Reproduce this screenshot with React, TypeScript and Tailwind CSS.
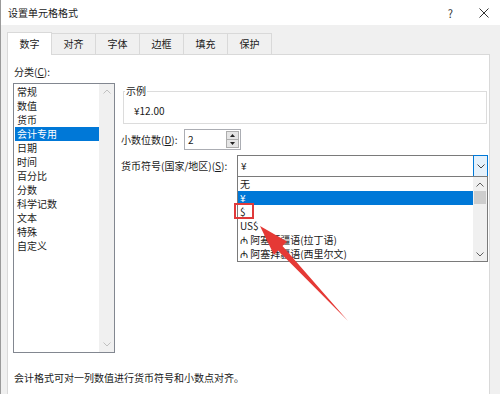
const categories = ["常规", "数值", "货币", "会计专用", "日期", "时间", "百分比", "分数", "科学记数", "文本", "特殊", "自定义"];
const tabs = ["数字", "对齐", "字体", "边框", "填充", "保护"];
const symbols = ["无", "¥", "$", "US$", "₼ 阿塞拜疆语(拉丁语)", "₼ 阿塞拜疆语(西里尔文)"];

const Chevron = ({ up, color }: { up?: boolean; color: string }) => (
  <svg width="8" height="5" viewBox="0 0 8 5">
    <polyline
      points={up ? "0.5,4.5 4,1 7.5,4.5" : "0.5,0.5 4,4 7.5,0.5"}
      fill="none"
      stroke={color}
      strokeWidth="1"
    />
  </svg>
);

const Triangle = ({ up }: { up?: boolean }) => (
  <svg width="5" height="3" viewBox="0 0 5 3">
    <polygon points={up ? "0,3 2.5,0 5,3" : "0,0 5,0 2.5,3"} fill="#222" />
  </svg>
);

export default function App() {
  return (
    <div className="relative w-[500px] h-[394px] overflow-hidden bg-[#f0f0f0] border-l border-[#9a9a9a] font-['Noto_Sans_CJK_SC',sans-serif] text-[10px] text-[#1a1a1a]">
      {/* title bar */}
      <div className="flex h-[25px] items-center bg-white pl-[7px]">
        <span className="leading-[14px]">设置单元格格式</span>
        <span className="ml-auto mr-[26px] text-[11px] leading-[14px] text-[#333]">?</span>
        <svg width="10" height="10" viewBox="0 0 10 10" className="mr-[11px]">
          <path d="M0.5 0.5 L9.5 9.5 M9.5 0.5 L0.5 9.5" stroke="#333" strokeWidth="1" />
        </svg>
      </div>

      <div className="pl-[6px] pt-[7px]">
        {/* tabs */}
        <div className="flex h-[22px] items-end">
          {tabs.map((t, i) =>
            i === 0 ? (
              <div
                key={t}
                className="relative z-10 -mb-px flex h-[23px] w-[45px] items-center justify-center border border-b-0 border-[#d9d9d9] bg-white leading-[14px]"
              >
                {t}
              </div>
            ) : (
              <div
                key={t}
                className="-ml-px flex h-[21px] w-[45px] items-center justify-center border border-b-0 border-[#d9d9d9] bg-[#f0f0f0] leading-[14px]"
              >
                {t}
              </div>
            )
          )}
        </div>

        {/* panel */}
        <div className="h-[345px] w-[483px] border border-[#d9d9d9] bg-white pl-[5px] pt-[10px]">
          <div className="flex">
            {/* category list */}
            <div className="w-[102px]">
              <div className="h-[14px] pl-px leading-[14px]">
                分类(<span className="underline">C</span>):
              </div>
              <div className="mt-[4px] flex h-[270px] border border-[#828790]">
                <div className="flex-1 pl-px pt-px">
                  {categories.map((c) => (
                    <div
                      key={c}
                      className={
                        c === "会计专用"
                          ? "h-[14px] bg-[#0078d7] pl-[2px] leading-[14px] text-white"
                          : "h-[14px] pl-[2px] leading-[14px]"
                      }
                    >
                      {c}
                    </div>
                  ))}
                </div>
                <div className="flex w-[15px] flex-col items-center justify-between bg-[#f0f0f0] py-[5px]">
                  <Chevron up color="#c0c0c0" />
                  <Chevron color="#c0c0c0" />
                </div>
              </div>
            </div>

            {/* right side */}
            <div className="ml-[6px] mr-[2px] flex-1">
              <fieldset className="ml-[2px] mt-[20px] border border-[#dcdcdc]">
                <legend className="ml-px px-px leading-[12px]">示例</legend>
                <div className="pb-[5px] pl-[10px] pt-[7px] leading-[14px]">¥12.00</div>
              </fieldset>

              <div className="mt-[5px] flex items-center">
                <div className="w-[63px] leading-[14px]">
                  小数位数(<span className="underline">D</span>):
                </div>
                <div className="flex h-[21px] w-[57px] border border-[#abadb3]">
                  <div className="flex-1 pl-[3px] leading-[19px]">2</div>
                  <div className="my-px mr-px flex w-[13px] flex-col border border-[#adadad]">
                    <div className="flex flex-1 items-center justify-center border-b border-[#adadad] bg-[#e5e5e5]">
                      <Triangle up />
                    </div>
                    <div className="flex flex-1 items-center justify-center bg-[#e5e5e5]">
                      <Triangle />
                    </div>
                  </div>
                </div>
              </div>

              <div className="mt-[5px] flex items-center">
                <div className="w-[116px] leading-[14px]">
                  货币符号(国家/地区)(<span className="underline">S</span>):
                </div>
                <div className="relative -mr-px flex h-[22px] flex-1 border border-[#7a7a7a]">
                  <div className="flex-1 pl-[3px] leading-[20px]">¥</div>
                  <div className="-my-px -mr-px flex w-[15px] items-center justify-center border border-[#0078d7] bg-[#e5f1fb]">
                    <Chevron color="#444" />
                  </div>

                  {/* dropdown list */}
                  <div className="absolute -left-px -right-px top-full z-20 flex h-[86px] border border-[#7a7a7a] bg-white">
                    <div className="flex-1">
                      {symbols.map((s, i) => (
                        <div
                          key={s}
                          className={
                            i === 1
                              ? "h-[14px] bg-[#0078d7] pl-[2px] leading-[14px] text-white"
                              : "h-[14px] pl-[2px] leading-[14px]"
                          }
                        >
                          {s}
                        </div>
                      ))}
                    </div>
                    <div className="flex w-[14px] flex-col items-center bg-[#f0f0f0]">
                      <div className="flex h-[14px] items-center">
                        <Chevron up color="#606060" />
                      </div>
                      <div className="h-[13px] w-[12px] bg-[#cdcdcd]" />
                      <div className="mt-auto flex h-[14px] items-center">
                        <Chevron color="#606060" />
                      </div>
                    </div>
                    <div className="absolute left-[-4px] top-[26px] h-[16px] w-[20px] border-2 border-[#e03a3a]" />
                  </div>
                </div>
              </div>
            </div>
          </div>

          <div className="ml-px mt-[18px] leading-[14px]">会计格式可对一列数值进行货币符号和小数点对齐。</div>
        </div>
      </div>

      {/* red annotation arrow */}
      <svg className="pointer-events-none absolute left-0 top-0 z-30" width="500" height="394" viewBox="0 0 500 394">
        <polygon
          points="259,226 286,241.5 281.5,246 347,321 277,250.5 273,255"
          fill="#e53935"
        />
      </svg>
    </div>
  );
}
